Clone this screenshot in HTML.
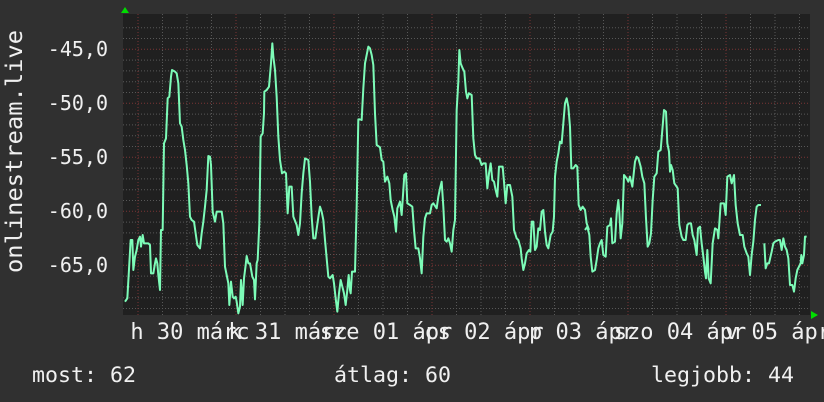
<!DOCTYPE html>
<html><head><meta charset="utf-8"><style>
html,body{margin:0;padding:0;background:#303030;}
svg{display:block;}
text{font-family:"DejaVu Sans Mono","Liberation Mono",monospace;fill:#f0f0f0;font-size:20px;}
text.xl{font-size:22px;}
text.lg{font-size:21.6px;}
text.vl{font-size:23px;}
</style></head><body>
<svg width="824" height="402" viewBox="0 0 824 402" xmlns="http://www.w3.org/2000/svg">
<rect width="824" height="402" fill="#303030"/>
<rect x="123" y="14" width="687" height="301" fill="#202020"/>
<g id="grid">
<g stroke="#585858" stroke-width="1" stroke-dasharray="1,2">
<line x1="123" x2="810" y1="27.7" y2="27.7"/><line x1="123" x2="810" y1="38.5" y2="38.5"/>
<line x1="123" x2="810" y1="60.1" y2="60.1"/><line x1="123" x2="810" y1="70.9" y2="70.9"/><line x1="123" x2="810" y1="81.7" y2="81.7"/><line x1="123" x2="810" y1="92.5" y2="92.5"/>
<line x1="123" x2="810" y1="114.1" y2="114.1"/><line x1="123" x2="810" y1="124.9" y2="124.9"/><line x1="123" x2="810" y1="135.7" y2="135.7"/><line x1="123" x2="810" y1="146.5" y2="146.5"/>
<line x1="123" x2="810" y1="168.1" y2="168.1"/><line x1="123" x2="810" y1="178.9" y2="178.9"/><line x1="123" x2="810" y1="189.7" y2="189.7"/><line x1="123" x2="810" y1="200.5" y2="200.5"/>
<line x1="123" x2="810" y1="222.1" y2="222.1"/><line x1="123" x2="810" y1="232.9" y2="232.9"/><line x1="123" x2="810" y1="243.7" y2="243.7"/><line x1="123" x2="810" y1="254.5" y2="254.5"/>
<line x1="123" x2="810" y1="276.1" y2="276.1"/><line x1="123" x2="810" y1="286.9" y2="286.9"/><line x1="123" x2="810" y1="297.7" y2="297.7"/><line x1="123" x2="810" y1="308.5" y2="308.5"/>
<line y1="14" y2="315" x1="162.5" x2="162.5"/><line y1="14" y2="315" x1="187" x2="187"/><line y1="14" y2="315" x1="211.5" x2="211.5"/>
<line y1="14" y2="315" x1="260.5" x2="260.5"/><line y1="14" y2="315" x1="285" x2="285"/><line y1="14" y2="315" x1="309.5" x2="309.5"/>
<line y1="14" y2="315" x1="358.5" x2="358.5"/><line y1="14" y2="315" x1="383" x2="383"/><line y1="14" y2="315" x1="407.5" x2="407.5"/>
<line y1="14" y2="315" x1="456.5" x2="456.5"/><line y1="14" y2="315" x1="481" x2="481"/><line y1="14" y2="315" x1="505.5" x2="505.5"/>
<line y1="14" y2="315" x1="554.5" x2="554.5"/><line y1="14" y2="315" x1="579" x2="579"/><line y1="14" y2="315" x1="603.5" x2="603.5"/>
<line y1="14" y2="315" x1="652.5" x2="652.5"/><line y1="14" y2="315" x1="677" x2="677"/><line y1="14" y2="315" x1="701.5" x2="701.5"/>
<line y1="14" y2="315" x1="750.5" x2="750.5"/><line y1="14" y2="315" x1="775" x2="775"/><line y1="14" y2="315" x1="799.5" x2="799.5"/>
</g>
<g stroke="#7a3434" stroke-width="1" stroke-dasharray="1,2">
<line x1="123" x2="810" y1="49.3" y2="49.3"/><line x1="123" x2="810" y1="103.3" y2="103.3"/><line x1="123" x2="810" y1="157.3" y2="157.3"/><line x1="123" x2="810" y1="211.3" y2="211.3"/><line x1="123" x2="810" y1="265.3" y2="265.3"/>
<line y1="14" y2="315" x1="138" x2="138"/><line y1="14" y2="315" x1="236" x2="236"/><line y1="14" y2="315" x1="334" x2="334"/><line y1="14" y2="315" x1="432" x2="432"/><line y1="14" y2="315" x1="530" x2="530"/><line y1="14" y2="315" x1="628" x2="628"/><line y1="14" y2="315" x1="726" x2="726"/>
</g>
</g>
<polygon points="121,13 125,7 129,13" fill="#00dd00"/>
<polygon points="811,311 818,315 811,319" fill="#00dd00"/>
<g fill="none" stroke="#7dfcb8" stroke-width="6" stroke-linejoin="round">
<polyline transform="translate(120,30) scale(0.33333)" points="15,815 22,805 27,718 32,630 37,630 40,720 45,680 50,660 55,630 60,620 63,650 68,615 72,640 85,640 90,645 93,730 100,730 105,700 108,685 112,700 115,735 120,780 123,600 128,600 132,340 138,325 143,205 148,200 153,140 156,120 165,125 170,130 175,160 180,280 185,290 190,330 195,360 200,405 205,460 210,560 215,570 222,575 227,610 232,645 240,655 245,610 250,575 255,530 260,480 265,378 270,380 273,405 278,545 285,575 290,545 300,545 305,545 310,580 315,710 320,735 325,760 328,825 333,755 338,800 342,805 347,800 350,815 355,850 360,830 363,750 368,825 372,745 377,705 380,678 385,700 390,700 397,740 402,750 405,808 410,700 413,690 418,580 422,320 428,310 432,250 433,185 440,180 447,170 453,100 457,40 460,80 465,120 470,200 475,320 480,390 486,430 493,425 498,430 503,550 508,470 515,470 520,560 530,585 535,615 540,580 545,490 550,430 555,385 565,390 570,455 575,560 580,625 586,625 591,590 596,555 600,530 605,545 610,570 615,630 625,740 630,745 638,735 642,760 647,805 652,845 657,790 662,750 667,770 672,790 677,825 682,780 686,735 690,780 692,790 696,725 705,725 710,530 715,268 720,268"/>
<polyline transform="translate(350,30) scale(0.33333)" points="30,268 35,270 40,175 45,100 55,50 60,55 65,75 70,105 75,250 80,345 90,352 95,390 100,395 105,455 112,440 118,460 122,510 128,540 133,560 138,605 142,535 150,515 155,555 160,480 163,435 168,430 172,520 180,525 187,530 192,600 197,655 205,655 210,685 215,730 220,620 225,565 230,550 240,550 245,525 250,520 260,535 265,500 270,475 275,455 280,530 285,630 290,635 295,625 300,640 305,665 310,600 315,570 320,240 325,155 328,60 332,100 338,115 343,125 348,185 352,205 357,190 365,195 370,325 375,375 380,385 388,385 395,405 400,400 407,400 412,475 417,430 422,400 427,450 432,455 437,480 442,500 447,410 458,410 462,455 467,520 472,465 480,465 487,500 492,600 500,625 505,630 512,655 515,685 520,720 525,700 530,670 537,660 541,665 545,575 550,575 555,660 560,650 565,595 570,600 575,545 580,540 585,605 590,645 595,655 602,615 608,605 612,560 615,440 620,395 625,370 630,335 635,340 640,280 645,220 650,205 655,230 660,290 664,415 670,415 677,405 682,410 686,525 692,540 698,530 705,540 710,580 717,600"/>
<polyline transform="translate(580,30) scale(0.33333)" points="15,600 22,590 28,615 32,680 37,725 45,720 50,690 55,655 60,640 65,630 70,675 77,680 82,590 90,585 93,565 97,640 105,635 110,550 115,510 118,545 122,625 127,580 132,435 140,445 145,455 150,440 157,470 165,395 170,380 175,385 182,410 187,440 193,460 198,565 203,650 208,640 213,610 218,510 223,440 230,430 235,365 242,360 247,300 252,240 258,245 262,340 267,365 270,425 273,405 278,420 283,460 290,470 293,475 298,585 305,620 310,630 317,630 322,585 327,580 333,580 338,615 343,630 350,675 354,595 360,590 365,640 370,680 375,725 378,745 382,660 386,745 392,760 398,640 405,595 412,600 415,625 422,520 432,520 437,555 442,440 450,435 455,460 462,435 467,525 473,580 480,615 488,615 493,650 500,670 505,680 510,735 515,675 520,635 525,570 530,530 535,525 543,525"/>
<polyline transform="translate(580,30) scale(0.33333)" points="553,640 557,715 562,700 567,700 575,665 580,640 585,635 595,630 600,630 605,660 610,625 615,650 620,660 625,685 630,765 637,765 642,785 647,745 652,720 657,710 662,700 664,675 667,700 672,675 675,620 680,620"/>
</g>
<g text-anchor="end">
<text x="108" y="56">-45,0</text>
<text x="108" y="110">-50,0</text>
<text x="108" y="164">-55,0</text>
<text x="108" y="218">-60,0</text>
<text x="108" y="272">-65,0</text>
</g>
<text class="vl" transform="translate(22,273) rotate(-90)" textLength="243" lengthAdjust="spacingAndGlyphs">onlinestream.live</text>
<g text-anchor="middle">
<text class="xl" x="190" y="339">h 30 márc</text>
<text class="xl" x="288" y="339">k 31 márc</text>
<text class="xl" x="386" y="339">sze 01 ápr</text>
<text class="xl" x="484" y="339">cs 02 ápr</text>
<text class="xl" x="582" y="339">p 03 ápr</text>
<text class="xl" x="680" y="339">szo 04 ápr</text>
<text class="xl" x="778" y="339">v 05 ápr</text>
</g>
<text class="lg" x="32" y="382">most: 62</text>
<text class="lg" x="334" y="382">átlag: 60</text>
<text class="lg" x="651" y="382">legjobb: 44</text>
</svg>
</body></html>
